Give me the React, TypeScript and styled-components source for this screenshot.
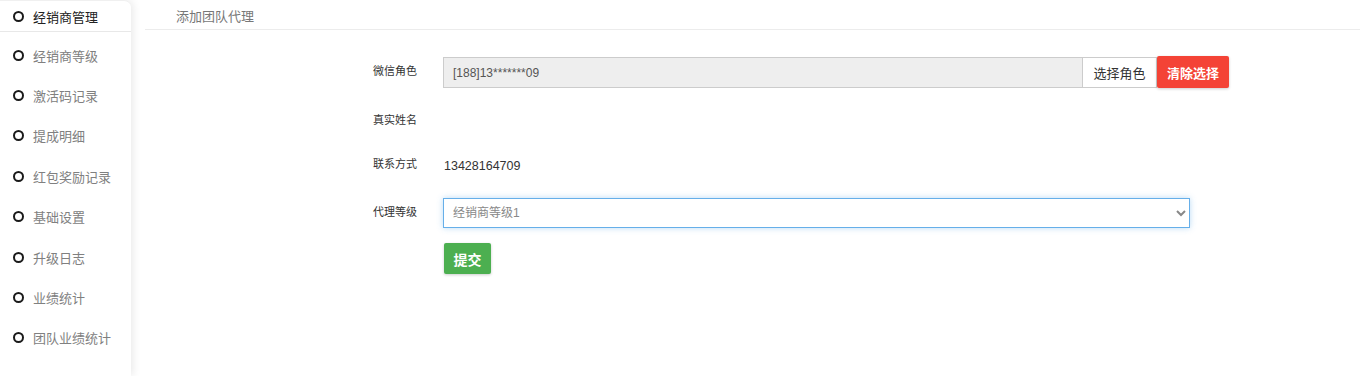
import styled, { createGlobalStyle } from "styled-components";

const GlobalStyle = createGlobalStyle`
    body {
        margin: 0;
        background: #fff;
        font-family: "Liberation Sans", "Noto Sans CJK SC", sans-serif;
    }
`

const Page = styled.div`
    display: flex;
    min-height: 100vh;
`

/* Side menu */

const Sidebar = styled.aside`
    width: 131px;
    flex-shrink: 0;
    background: #fff;
    border-radius: 0 7px 0 0;
    box-shadow: 2px 0 8px rgba(0,0,0,0.09);
    border-top: 1px solid #f0f0f0;
    box-sizing: border-box;
`

const MenuList = styled.ul`
    list-style: none;
    margin: 0;
    padding: 0;
`

const MenuItem = styled.li<{ $active?: boolean }>`
    display: flex;
    align-items: center;
    height: ${({ $active }) => ($active ? "30px" : "40.4px")};
    margin-bottom: ${({ $active }) => ($active ? "3px" : "0")};
    border-bottom: ${({ $active }) => ($active ? "1px solid #e8e8e8" : "none")};
    padding-left: 13px;
    font-size: 13px;
    color: ${({ $active }) => ($active ? "#222" : "#808080")};
`

const Dot = styled.span`
    width: 7px;
    height: 7px;
    border: 2px solid #1a1a1a;
    border-radius: 50%;
    margin-right: 9px;
`

/* Main area */

const Main = styled.main`
    flex: 1;
    padding-left: 14px;
`

const Header = styled.div`
    height: 29px;
    line-height: 33px;
    border-bottom: 1px solid #ececec;
    padding-left: 31px;
    font-size: 13px;
    color: #777;
`

const Form = styled.form`
    padding-left: 228px;
`

const Row = styled.div<{ $gap: number }>`
    display: flex;
    align-items: flex-start;
    margin-top: ${({ $gap }) => $gap}px;
    min-height: 31px;
`

const Label = styled.label`
    width: 70px;
    padding-top: 6px;
    line-height: 16px;
    font-size: 11px;
    color: #333;
`

const InputGroup = styled.div`
    display: flex;
    width: 786px;
`

const ReadInput = styled.input`
    width: 640px;
    height: 31px;
    box-sizing: border-box;
    padding: 0 9px;
    background: #eee;
    border: 1px solid #ccc;
    font-family: "Liberation Sans", sans-serif;
    font-size: 12px;
    color: #555;
    outline: none;
`

const PickButton = styled.button`
    width: 74px;
    height: 31px;
    background: #fff;
    border: 1px solid #ccc;
    border-left: none;
    font-family: "Liberation Sans", "Noto Sans CJK SC", sans-serif;
    font-size: 13px;
    color: #333;
    padding: 0;
`

const ClearButton = styled.button`
    width: 72px;
    height: 32px;
    margin-top: -1px;
    background: #f44336;
    border: none;
    border-radius: 2px;
    box-shadow: 0 1px 3px rgba(0,0,0,0.2);
    font-family: "Liberation Sans", "Noto Sans CJK SC", sans-serif;
    font-size: 13px;
    font-weight: bold;
    color: #fff;
    padding: 0;
`

const PlainValue = styled.div`
    padding-top: 6px;
    padding-left: 1px;
    line-height: 20px;
    font-size: 12.5px;
    color: #333;
`

const Select = styled.select`
    width: 747px;
    height: 30px;
    box-sizing: border-box;
    padding: 0 5px;
    background: #fff;
    border: 1px solid #66afe9;
    box-shadow: 0 0 6px rgba(102,175,233,0.45);
    font-family: "Liberation Sans", "Noto Sans CJK SC", sans-serif;
    font-size: 12px;
    color: #888;
    outline: none;
`

const SubmitButton = styled.button`
    width: 47px;
    height: 31px;
    margin-left: 1px;
    background: #4caf50;
    border: none;
    border-radius: 2px;
    box-shadow: 0 1px 3px rgba(0,0,0,0.2);
    font-family: "Liberation Sans", "Noto Sans CJK SC", sans-serif;
    font-size: 14px;
    font-weight: bold;
    color: #fff;
    padding: 0;
`

const menu = ["经销商管理", "经销商等级", "激活码记录", "提成明细", "红包奖励记录", "基础设置", "升级日志", "业绩统计", "团队业绩统计"];

export default function App() {
    return (
        <Page>
            <GlobalStyle />
            <Sidebar>
                <MenuList>
                    {menu.map((name, i) => (
                        <MenuItem key={name} $active={i === 0}>
                            <Dot />
                            {name}
                        </MenuItem>
                    ))}
                </MenuList>
            </Sidebar>
            <Main>
                <Header>添加团队代理</Header>
                <Form onSubmit={(e) => e.preventDefault()}>
                    <Row $gap={27}>
                        <Label>微信角色</Label>
                        <InputGroup>
                            <ReadInput readOnly value="[188]13*******09" />
                            <PickButton type="button">选择角色</PickButton>
                            <ClearButton type="button">清除选择</ClearButton>
                        </InputGroup>
                    </Row>
                    <Row $gap={18}>
                        <Label>真实姓名</Label>
                    </Row>
                    <Row $gap={13}>
                        <Label>联系方式</Label>
                        <PlainValue>13428164709</PlainValue>
                    </Row>
                    <Row $gap={17}>
                        <Label>代理等级</Label>
                        <Select defaultValue="1">
                            <option value="1">经销商等级1</option>
                        </Select>
                    </Row>
                    <Row $gap={14}>
                        <Label />
                        <SubmitButton type="submit">提交</SubmitButton>
                    </Row>
                </Form>
            </Main>
        </Page>
    );
}
